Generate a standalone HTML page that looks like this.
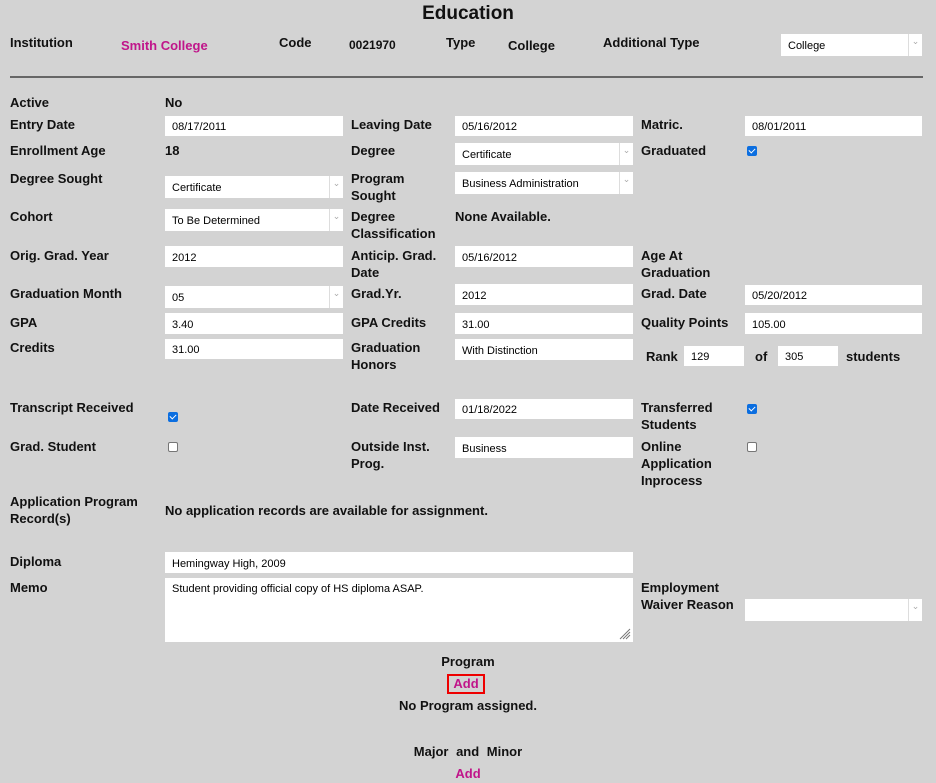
<!DOCTYPE html><html><head><style>
body{margin:0;width:936px;height:783px;background:#d3d3d3;font-family:"Liberation Sans",Arial,sans-serif;position:relative;overflow:hidden;color:#111}
.l{position:absolute;font-size:13px;font-weight:bold;line-height:17px;white-space:nowrap}
.v{position:absolute;font-size:13px;font-weight:bold;line-height:17px}
.i{position:absolute;background:#fff;font-size:11px;font-weight:normal;box-sizing:border-box;padding-left:7px;display:flex;align-items:center;color:#000;padding-top:2px}
.s:after{content:"⌄";position:absolute;right:0;top:0;bottom:0;width:13px;border-left:1px solid #ddd;color:#aaa;font-size:9px;text-align:center;line-height:14px}
.cb{position:absolute;width:10px;height:10px;box-sizing:border-box;border:1px solid #767676;background:#fff;border-radius:2px}
.ck{background:#0b6ee0;border-color:#0b6ee0}
.ck:after{content:"";position:absolute;left:2px;top:0px;width:3px;height:5px;border:solid #fff;border-width:0 1.5px 1.5px 0;transform:rotate(45deg)}
.m{color:#c0158a}
</style></head><body>
<div class="l" style="left:0;width:936px;text-align:center;top:3px;font-size:19px;line-height:22px">Education</div>
<div class="l" style="left:10px;top:34px">Institution</div>
<div class="l m" style="left:121px;top:37px">Smith College</div>
<div class="l" style="left:279px;top:34px">Code</div>
<div class="l" style="left:349px;top:37px;font-size:12px">0021970</div>
<div class="l" style="left:446px;top:34px">Type</div>
<div class="l" style="left:508px;top:37px">College</div>
<div class="l" style="left:603px;top:34px">Additional Type</div>
<div class="i s" style="left:781px;top:34px;width:141px;height:22px">College</div>
<div style="position:absolute;left:10px;top:76px;width:913px;height:2px;background:#666"></div>

<div class="l" style="left:10px;top:94px">Active</div><div class="v" style="left:165px;top:94px">No</div>
<div class="l" style="left:10px;top:116px">Entry Date</div><div class="i" style="left:165px;top:116px;width:178px;height:20px">08/17/2011</div>
<div class="l" style="left:351px;top:116px">Leaving Date</div><div class="i" style="left:455px;top:116px;width:178px;height:20px">05/16/2012</div>
<div class="l" style="left:641px;top:116px">Matric.</div><div class="i" style="left:745px;top:116px;width:177px;height:20px">08/01/2011</div>

<div class="l" style="left:10px;top:142px">Enrollment Age</div><div class="v" style="left:165px;top:142px">18</div>
<div class="l" style="left:351px;top:142px">Degree</div><div class="i s" style="left:455px;top:143px;width:178px;height:22px">Certificate</div>
<div class="l" style="left:641px;top:142px">Graduated</div><div class="cb ck" style="left:747px;top:146px"></div>

<div class="l" style="left:10px;top:170px">Degree Sought</div><div class="i s" style="left:165px;top:176px;width:178px;height:22px">Certificate</div>
<div class="l" style="left:351px;top:170px">Program<br>Sought</div><div class="i s" style="left:455px;top:172px;width:178px;height:22px">Business Administration</div>

<div class="l" style="left:10px;top:208px">Cohort</div><div class="i s" style="left:165px;top:209px;width:178px;height:22px">To Be Determined</div>
<div class="l" style="left:351px;top:208px">Degree<br>Classification</div><div class="v" style="left:455px;top:208px">None Available.</div>

<div class="l" style="left:10px;top:247px">Orig. Grad. Year</div><div class="i" style="left:165px;top:246px;width:178px;height:21px">2012</div>
<div class="l" style="left:351px;top:247px">Anticip. Grad.<br>Date</div><div class="i" style="left:455px;top:246px;width:178px;height:21px">05/16/2012</div>
<div class="l" style="left:641px;top:247px">Age At<br>Graduation</div>

<div class="l" style="left:10px;top:285px">Graduation Month</div><div class="i s" style="left:165px;top:286px;width:178px;height:22px">05</div>
<div class="l" style="left:351px;top:285px">Grad.Yr.</div><div class="i" style="left:455px;top:284px;width:178px;height:21px">2012</div>
<div class="l" style="left:641px;top:285px">Grad. Date</div><div class="i" style="left:745px;top:285px;width:177px;height:20px">05/20/2012</div>

<div class="l" style="left:10px;top:314px">GPA</div><div class="i" style="left:165px;top:313px;width:178px;height:21px">3.40</div>
<div class="l" style="left:351px;top:314px">GPA Credits</div><div class="i" style="left:455px;top:313px;width:178px;height:21px">31.00</div>
<div class="l" style="left:641px;top:314px">Quality Points</div><div class="i" style="left:745px;top:313px;width:177px;height:21px">105.00</div>

<div class="l" style="left:10px;top:339px">Credits</div><div class="i" style="left:165px;top:339px;width:178px;height:20px">31.00</div>
<div class="l" style="left:351px;top:339px">Graduation<br>Honors</div><div class="i" style="left:455px;top:339px;width:178px;height:21px">With Distinction</div>
<div class="l" style="left:646px;top:348px">Rank</div><div class="i" style="left:684px;top:346px;width:60px;height:20px">129</div>
<div class="l" style="left:755px;top:348px">of</div><div class="i" style="left:778px;top:346px;width:60px;height:20px">305</div>
<div class="l" style="left:846px;top:348px">students</div>

<div class="l" style="left:10px;top:399px">Transcript Received</div><div class="cb ck" style="left:168px;top:412px"></div>
<div class="l" style="left:351px;top:399px">Date Received</div><div class="i" style="left:455px;top:399px;width:178px;height:20px">01/18/2022</div>
<div class="l" style="left:641px;top:399px">Transferred<br>Students</div><div class="cb ck" style="left:747px;top:404px"></div>

<div class="l" style="left:10px;top:438px">Grad. Student</div><div class="cb" style="left:168px;top:442px"></div>
<div class="l" style="left:351px;top:438px">Outside Inst.<br>Prog.</div><div class="i" style="left:455px;top:437px;width:178px;height:21px">Business</div>
<div class="l" style="left:641px;top:438px">Online<br>Application<br>Inprocess</div><div class="cb" style="left:747px;top:442px"></div>

<div class="l" style="left:10px;top:493px">Application Program<br>Record(s)</div>
<div class="v" style="left:165px;top:502px">No application records are available for assignment.</div>

<div class="l" style="left:10px;top:553px">Diploma</div><div class="i" style="left:165px;top:552px;width:468px;height:21px">Hemingway High, 2009</div>
<div class="l" style="left:10px;top:579px">Memo</div>
<div class="i" style="left:165px;top:578px;width:468px;height:64px;align-items:flex-start;padding-top:5px">Student providing official copy of HS diploma ASAP.
<svg style="position:absolute;right:2px;bottom:2px" width="12" height="12"><path d="M11 1L1 11M11 4L4 11M11 7L7 11" stroke="#777" stroke-width="1"/></svg></div>
<div class="l" style="left:641px;top:579px">Employment<br>Waiver Reason</div>
<div class="i s" style="left:745px;top:599px;width:177px;height:22px"></div>

<div class="l" style="left:0;width:936px;text-align:center;top:653px">Program</div>
<div class="l m" style="left:447px;top:674px;width:34px;height:16px;border:2px solid #e00;text-align:center;line-height:16px">Add</div>
<div class="l" style="left:0;width:936px;text-align:center;top:697px">No Program assigned.</div>
<div class="l" style="left:0;width:936px;text-align:center;top:743px;word-spacing:4px">Major and Minor</div>
<div class="l m" style="left:0;width:936px;text-align:center;top:765px">Add</div>
</body></html>
